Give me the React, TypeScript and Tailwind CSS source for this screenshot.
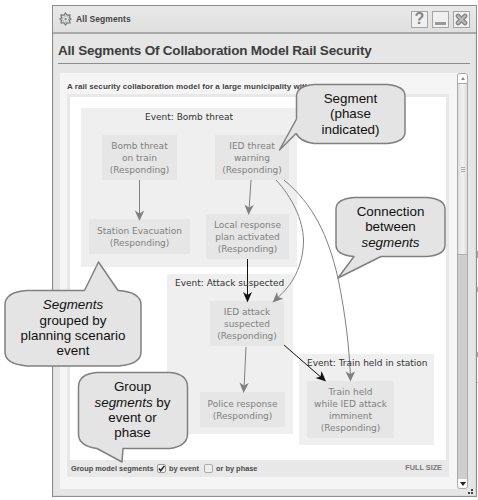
import type { ReactNode } from "react";

function Gear() {
  return (
    <svg width="13" height="14" viewBox="0 0 13 14" fill="none" stroke="#777">
      <path d="M6.500 1L8 3.200L11 3L10.500 5.800L12 7L10.500 8.300L11 11L8 10.900L6.500 13L5 10.900L2 11L2.500 8.300L1 7L2.500 5.800L2 3L5 3.200Z" strokeWidth="1.2" />
      <circle cx="6.5" cy="7" r="3" strokeWidth="1" stroke="#999" strokeDasharray="2 1" />
      <circle cx="6.5" cy="7" r="1.1" fill="#777" stroke="none" />
    </svg>
  );
}

function TitleButton({ children }: { children: ReactNode }) {
  return (
    <div className="flex h-[17px] w-[17px] items-center justify-center border border-[#a5a5a5] bg-[#f0f0f0]">
      {children}
    </div>
  );
}

function Cluster({ box, label, labelBox }: { box: string; label: string; labelBox: string }) {
  return (
    <div className={`absolute bg-[#efefef] ${box}`}>
      <div className={`absolute z-10 text-[#333] ${labelBox}`}>{label}</div>
    </div>
  );
}

function SegmentNode({ box, lines }: { box: string; lines: string[] }) {
  return (
    <div
      className={`absolute flex flex-col items-center justify-center bg-[#e6e6e6] text-[#808080] ${box}`}
    >
      {lines.map((l) => (
        <div key={l}>{l}</div>
      ))}
    </div>
  );
}

function Callout({ box, children }: { box: string; children: ReactNode }) {
  return (
    <div
      className={`absolute flex flex-col items-center justify-center whitespace-nowrap text-[13.4px] leading-[15.4px] text-[#111] ${box}`}
    >
      {children}
    </div>
  );
}

export default function App() {
  return (
    <div className="relative h-[500px] w-[478px] overflow-hidden bg-white pl-[52px] pt-[5px] font-['Liberation_Sans',Arial,sans-serif]">
      <div className="flex h-[492px] w-[425px] flex-col border border-[#8e8e8e] bg-[#e6e6e6] shadow-[inset_0_0_0_1px_#dadada]">
        <header className="flex h-[28px] shrink-0 items-center border-b-2 border-[#a9a9a9] bg-gradient-to-b from-[#e9e9e9] to-[#dfdfdf] pl-[6px] pr-[6px]">
          <Gear />
          <span className="ml-[4px] text-[8.5px] font-bold tracking-[0.08px] text-[#444]">All Segments</span>
          <div className="ml-auto flex gap-[4px]">
            <TitleButton>
              <span className="text-[16px] font-bold leading-none text-[#858585]">?</span>
            </TitleButton>
            <TitleButton>
              <div className="mt-[8px] h-[3px] w-[11px] bg-[#999]" />
            </TitleButton>
            <TitleButton>
              <svg width="13" height="13" viewBox="0 0 13 13">
                <path d="M3 3L10 10M10 3L3 10" stroke="#858585" strokeWidth="4.6" strokeLinecap="round" />
                <path d="M3 3L10 10M10 3L3 10" stroke="#bbb" strokeWidth="2" strokeLinecap="round" />
              </svg>
            </TitleButton>
          </div>
        </header>
        <h1 className="ml-[5px] mr-[6px] h-[30px] shrink-0 whitespace-nowrap border-b border-[#8c8c8c] pt-[9px] text-[13.5px] font-bold leading-[16px] tracking-[-0.2px] text-[#3c3c3c]">
          All Segments Of Collaboration Model Rail Security
        </h1>
        <div className="ml-[7px] mt-[9px] flex h-[416px]">
          <main className="w-[397px] bg-[#f5f5f5] pl-[7px] pt-[9px]">
            <p className="h-[11px] whitespace-nowrap text-[8px] font-bold leading-[10px] tracking-[0.06px] text-[#444]">
              A rail security collaboration model for a large municipality with subway
            </p>
            <section className="mt-px flex h-[383px] w-[382px] flex-col bg-[#e8e8e8] px-[3px] pt-[3px]">
              <div className="relative h-[363px] w-[376px] bg-white text-center font-['DejaVu_Sans',Verdana,sans-serif] text-[9px] leading-[12px] whitespace-nowrap">
                <Cluster box="left-[11px] top-[11px] h-[159px] w-[216px]" label="Event: Bomb threat" labelBox="left-0 w-full top-[3px]" />
                <Cluster box="left-[97px] top-[177px] h-[160px] w-[126px]" label="Event: Attack suspected" labelBox="left-[8px] top-[3px]" />
                <Cluster box="left-[229px] top-[257px] h-[91px] w-[135px]" label="Event: Train held in station" labelBox="left-[8px] top-[3px]" />
                <SegmentNode box="left-[32px] top-[38px] h-[45px] w-[75px]" lines={["Bomb threat", "on train", "(Responding)"]} />
                <SegmentNode box="left-[19px] top-[122px] h-[35px] w-[101px]" lines={["Station Evacuation", "(Responding)"]} />
                <SegmentNode box="left-[145px] top-[38px] h-[45px] w-[74px]" lines={["IED threat", "warning", "(Responding)"]} />
                <SegmentNode box="left-[136px] top-[117px] h-[45px] w-[83px]" lines={["Local response", "plan activated", "(Responding)"]} />
                <SegmentNode box="left-[140px] top-[204px] h-[45px] w-[74px]" lines={["IED attack", "suspected", "(Responding)"]} />
                <SegmentNode box="left-[130px] top-[295px] h-[35px] w-[85px]" lines={["Police response", "(Responding)"]} />
                <SegmentNode box="left-[237px] top-[284px] h-[57px] w-[87px]" lines={["Train held", "while IED attack", "imminent", "(Responding)"]} />
              </div>
              <div className="flex h-[17px] items-center text-[7.4px] font-bold text-[#4a4a4a]">
                <span className="ml-px w-[83px] whitespace-nowrap">Group model segments</span>
                <span className="ml-[3px] flex h-[9px] w-[9px] items-center justify-center rounded-[2px] border border-[#999] bg-[#f2f2f2]">
                  <svg width="7" height="7" viewBox="0 0 7 7">
                    <path d="M1 3.500L2.700 5.700L6.300 1" fill="none" stroke="#222" strokeWidth="1.5" />
                  </svg>
                </span>
                <span className="ml-[3px] w-[32px] whitespace-nowrap">by event</span>
                <span className="ml-[3px] h-[9px] w-[9px] rounded-[2px] border border-[#aaa] bg-[#eee]" />
                <span className="ml-[3px] whitespace-nowrap">or by phase</span>
                <span className="ml-auto mr-[4px] text-[7.3px] text-[#777]">FULL SIZE</span>
              </div>
            </section>
          </main>
          <aside className="flex w-[11px] flex-col overflow-hidden rounded-[3px] border border-[#aaa] bg-[#cecece]">
            <div className="flex h-[10px] items-center justify-center border-b border-[#aaa] bg-white">
              <div className="border-x-[2.5px] border-b-[3px] border-x-transparent border-b-[#888]" />
            </div>
            <div className="flex h-[171px] flex-col items-center justify-center gap-px border-b border-[#aaa] bg-gradient-to-r from-[#dedede] via-[#f2f2f2] to-[#dcdcdc]">
              <div className="h-px w-[4px] bg-[#aaa]" />
              <div className="h-px w-[4px] bg-[#aaa]" />
              <div className="h-px w-[4px] bg-[#aaa]" />
            </div>
            <div className="mt-auto flex h-[9px] items-center justify-center bg-white">
              <div className="border-x-[3px] border-t-[4px] border-x-transparent border-t-[#222]" />
            </div>
          </aside>
        </div>
      </div>

      <svg className="absolute left-0 top-0" width="478" height="500" viewBox="0 0 478 500" fill="none">
        <g fill="#444">
          <rect x="471" y="489" width="2" height="2" />
          <rect x="468" y="492" width="2" height="2" />
          <rect x="471" y="492" width="2" height="2" />
        </g>
        <g fill="#aaa">
          <rect x="477" y="251" width="1" height="7" />
          <rect x="477" y="287" width="1" height="5" />
          <rect x="477" y="352" width="1" height="5" />
          <rect x="477" y="382" width="1" height="1" />
        </g>
        <g stroke="#808080" strokeWidth="1">
          <path d="M139.500 180V217" />
          <path d="M251 180L249 211" />
          <path d="M276 180C292 197 303 220 303.500 240C303.500 266 292 286 276 299" />
          <path d="M284 180C313 204 328 235 338 278C346 318 349 346 350.500 377" />
          <path d="M246 347L244 389" />
        </g>
        <g stroke="#111" strokeWidth="1">
          <path d="M247.500 259V299" />
          <path d="M284 345L323 379" />
        </g>
        <g fill="#808080">
          <path d="M139.500 221L134.800 210.500L139.500 213.500L144.200 210.500Z" />
          <path d="M248.500 215L244.500 204.500L249 207.500L253.800 205Z" />
          <path d="M272.500 302.500L277 292L278 297L283.300 298.700Z" />
          <path d="M350.500 381.500L345.500 371.500L350.200 374L355 371.500Z" />
          <path d="M243.500 393L239.500 382.500L244 385.500L248.800 383Z" />
        </g>
        <g fill="#111">
          <path d="M247.500 302.500L243 292L247.500 295L252 292Z" />
          <path d="M326 381.500L315.500 378L320.500 376.500L321.500 371Z" />
        </g>
        <g fill="#e4e4e4" stroke="#808080" strokeWidth="1.5" strokeLinejoin="round">
          <path d="M314 84.500H387Q405 86 405 96V132Q405 142 387 143.500H314Q301 142 296 133.500L279.500 150L296.500 119V96Q297 86 314 84.500Z" />
          <path d="M354 197.500H427Q445 199 445 209V245Q445 255 427 256.500H381L338 278L354 256.500Q336 255 336 245V209Q336 199 354 197.500Z" />
          <path d="M27 290.500H84.500L98.500 262L118 290.500Q141 292 141 305V352Q141 364 119 366H27Q5 364 5 352V305Q5 292 27 290.500Z" />
          <path d="M97 372.500H170Q187.500 374 187.500 387V434Q187.500 446 170 448.500H123L122 462L97 448.500Q78.500 446 78.500 434V387Q78.500 374 97 372.500Z" />
        </g>
      </svg>
      <Callout box="left-[296px] top-[84px] h-[60px] w-[109px]">
        <span>Segment</span>
        <span>(phase</span>
        <span>indicated)</span>
      </Callout>
      <Callout box="left-[336px] top-[197px] h-[60px] w-[109px]">
        <span>Connection</span>
        <span>between</span>
        <em>segments</em>
      </Callout>
      <Callout box="left-[5px] top-[290px] h-[76px] w-[136px]">
        <em>Segments</em>
        <span>grouped by</span>
        <span>planning scenario</span>
        <span>event</span>
      </Callout>
      <Callout box="left-[78px] top-[372px] h-[76px] w-[109px]">
        <span>Group</span>
        <span>
          <em>segments</em> by
        </span>
        <span>event or</span>
        <span>phase</span>
      </Callout>
    </div>
  );
}
